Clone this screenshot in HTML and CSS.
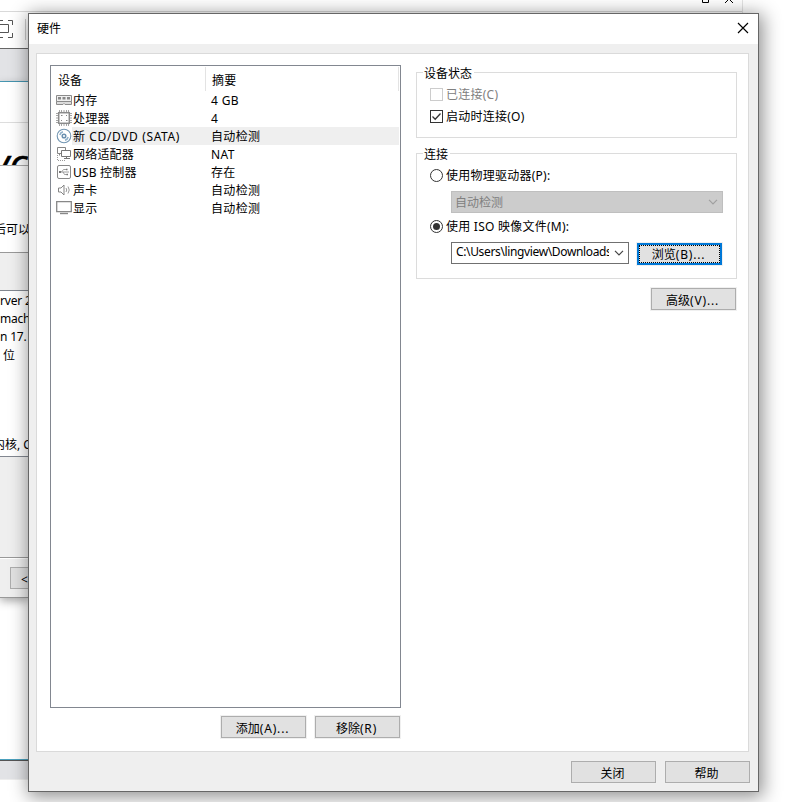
FILE: index.html
```html
<!DOCTYPE html>
<html lang="zh-CN">
<head>
<meta charset="utf-8">
<title>硬件</title>
<link rel="stylesheet" href="styles.css">
</head>
<body>
<div class="desktop">
  <div class="host">
    <div class="host-title">
      <svg width="40" height="11" viewBox="0 0 40 11"><path d="M2.5-4v6.500h6V-4M25 3l8-8M33 3l-8-8" fill="none" stroke="#000"/></svg>
    </div>
    <div class="host-tools">
      <svg width="13" height="20" viewBox="0 0 13 20"><path d="M0 5.500h8.500v8H0M8 1.500h4.500V6M8 18.500h4.500V14M0 1.500h3M0 18.500h3" fill="none" stroke="#555"/></svg>
      <i class="tool-sep"></i>
    </div>
    <div class="host-tabs"></div>
  </div>
  <div class="wizard">
    <div class="wiz-top"></div>
    <div class="wiz-logo"><span>vc</span></div>
    <div class="wiz-info">后可以</div>
    <div class="wiz-gap"></div>
    <div class="wiz-list"><p>rver 2</p><p>machi</p><p>n 17.</p><p class="bits">位</p><p class="cores">内核, C</p></div>
    <div class="wiz-space"></div>
    <div class="wiz-foot"><div class="back">&lt;</div></div>
  </div>
  <div class="host-bottom"></div>
</div>

<div class="dialog">
  <header class="titlebar"><span>硬件</span>
    <svg width="12" height="12" viewBox="0 0 12 12"><path d="M1 1l10 10M11 1L1 11" stroke="#000" stroke-width="1.150"/></svg>
  </header>
  <main class="page">
    <section class="left">
      <div class="list">
        <div class="row head"><span>设备</span><span class="sum">摘要</span></div>
        <div class="row"><svg class="ic" viewBox="0 0 16 16"><path d="M.5 3.500h15v6H.5z" fill="#f0f0f0" stroke="#8b8b8b"/><path d="M2 5h3v2.500H2zM6.500 5h3v2.500h-3zM11 5h3v2.500h-3z" fill="#888"/><path d="M.5 9.500v3H7l1-1 1 1h6.500v-3z" fill="#ddd" stroke="#8b8b8b"/></svg><span class="name">内存</span><span class="sum">4 GB</span></div>
        <div class="row"><svg class="ic" viewBox="0 0 16 16"><path d="M3.500 0v16M5.500 0v16M8 0v16M10.500 0v16M12.500 0v16M0 3.500h16M0 5.500h16M0 8h16M0 10.500h16M0 12.500h16" stroke="#a5a5a5"/><rect x="2.700" y="2.700" width="10.600" height="10.600" fill="#fff" stroke="#8b8b8b" stroke-width="1.500"/><path d="M5 5.500h1.500M10 5.500h1M5 10.500h1M10 10.500h1.500" stroke="#888"/></svg><span class="name">处理器</span><span class="sum">4</span></div>
        <div class="row selected"><svg class="ic" viewBox="0 0 16 16"><circle cx="8" cy="8" r="6.800" fill="#fff" stroke="#7295b2" stroke-width="1.100"/><circle cx="8" cy="8" r="1.800" fill="#fff" stroke="#6a90b0" stroke-width="1.500"/><path d="M3.800 7a4.500 4.500 0 0 1 3.200-3.200M12.200 9A4.500 4.500 0 0 1 9 12.200" fill="none" stroke="#8fb0ca" stroke-width="1.500"/></svg><span class="name cd">新 CD/DVD (SATA)</span><span class="sum">自动检测</span></div>
        <div class="row"><svg class="ic" viewBox="0 0 16 16"><path d="M1.500 7.500v-6h8V4M1.500 7.500H5M3.500 7.500v2" fill="none" stroke="#858585"/><path d="M5.500 4.500h9v6h-9zM10.500 10.500v2M8 12.500h6" fill="#fff" stroke="#777"/><path d="M1.500 9v5.500H10" fill="none" stroke="#999" stroke-dasharray="1 1"/></svg><span class="name">网络适配器</span><span class="sum">NAT</span></div>
        <div class="row"><svg class="ic" viewBox="0 0 16 16"><rect x="1.500" y="1.500" width="13" height="13" rx="1.500" fill="#fff" stroke="#888"/><path d="M3.500 8H13M5.500 8l2-2.500H10M7 8l1.500 2.500H11" fill="none" stroke="#888" stroke-width=".8"/><path d="M3 7h2v2H3zM10 4.800h1.500v1.500H10zM10.500 9.700H12v1.500h-1.500z" fill="#777"/></svg><span class="name">USB 控制器</span><span class="sum">存在</span></div>
        <div class="row"><svg class="ic" viewBox="0 0 16 16"><path d="M2.500 6h2.500l3-3v10l-3-3H2.500z" fill="#fff" stroke="#858585"/><path d="M10 6q1.500 2 0 4M12 4.500q2.500 3.500 0 7" fill="none" stroke="#999"/></svg><span class="name">声卡</span><span class="sum">自动检测</span></div>
        <div class="row"><svg class="ic" viewBox="0 0 16 16"><path d="M.7 1.700h14.600v10H.7z" fill="#fff" stroke="#888" stroke-width="1.300"/><path d="M4 13.500h8" stroke="#888" stroke-width="1.400"/></svg><span class="name">显示</span><span class="sum">自动检测</span></div>
      </div>
      <div class="actions"><button>添加<span>(A)...</span></button><button>移除<span>(R)</span></button></div>
    </section>
    <section class="right">
      <div class="group status">
        <div class="legend"><span>设备状态</span></div>
        <label class="option off"><i class="box"></i>已连接(C)</label>
        <label class="option second"><i class="box"><svg width="11" height="11" viewBox="0 0 11 11"><path d="M1.500 5.500l2.700 2.700L9.500 2.500" fill="none" stroke="#333" stroke-width="1.300"/></svg></i>启动时连接(O)</label>
      </div>
      <div class="group connect">
        <div class="legend"><span>连接</span></div>
        <label class="option"><i class="radio"></i>使用物理驱动器(P):</label>
        <div class="combo disabled"><span>自动检测</span><svg width="10" height="6" viewBox="0 0 10 6"><path d="M1 .8l4 4 4-4" fill="none" stroke="#a0a0a0" stroke-width="1.200"/></svg></div>
        <label class="option"><i class="radio on"></i>使用 ISO 映像文件(M):</label>
        <div class="iso"><div class="combo"><span class="path">C:\Users\lingview\Downloads</span><svg width="10" height="6" viewBox="0 0 10 6"><path d="M1 .8l4 4 4-4" fill="none" stroke="#444" stroke-width="1.200"/></svg></div><button class="focus">浏览<span>(B)...</span></button></div>
      </div>
      <button class="advanced">高级<span>(V)...</span></button>
    </section>
  </main>
  <footer class="footer"><button>关闭</button><button>帮助</button></footer>
</div>
</body>
</html>
```
FILE: styles.css
```css
* { box-sizing: border-box; }
body { margin: 0; width: 789px; height: 802px; overflow: hidden; background: #fff; color: #000; font: 12px/18px "Noto Sans", "Noto Sans CJK SC", sans-serif; position: relative; }
p { margin: 0; }
svg { display: block; flex: none; }
.desktop { height: 802px; display: flex; flex-direction: column; }
.host { width: 743px; border-right: 1px solid #e3e3e3; }
.host-title { height: 12px; border-bottom: 1px solid #d9d9d9; padding-left: 700px; }
.host-tools { height: 36px; display: flex; align-items: flex-start; padding-top: 7px; }
.tool-sep { width: 1px; height: 21px; background: #ccc; margin-left: 12px; }
.host-tabs { height: 34px; border-top: 1px solid #666; border-bottom: 1px solid #4ba0bd; background: #e2e3e6; width: 29px; }
.wizard { width: 29px; height: 516px; overflow: hidden; border-bottom: 1px solid #999; box-shadow: 0 3px 10px rgba(0,0,0,.35); display: flex; flex-direction: column; white-space: nowrap; }
.wiz-top { height: 41px; border-bottom: 1px solid #ddd; }
.wiz-logo { height: 43px; border-bottom: 1px solid #aaa; overflow: hidden; }
.wiz-logo span { display: block; font: italic 40px/50px "Open Sans", sans-serif; margin: 15px 0 0 -9px; -webkit-text-stroke: .6px #000; }
.wiz-info { height: 87px; padding-top: 55px; margin-left: -6px; border-bottom: 1px solid #999; }
.wiz-gap { height: 37px; background: #efefef; }
.wiz-list { height: 168px; border-top: 1px solid #828790; border-bottom: 1px solid #828790; padding-top: 1px; letter-spacing: -.2px; }
.wiz-list p { height: 18px; }
.wiz-list .bits { padding: 1px 0 0 3px; }
.wiz-list .cores { margin: 72px 0 0 -7px; letter-spacing: 0; }
.wiz-space { height: 101px; background: #efefef; border-bottom: 1px solid #999; }
.wiz-foot { height: 39px; background: #efefef; border-top: 1px solid #fff; padding: 8px 0 0 10px; }
.back { width: 85px; height: 22px; border: 1px solid #adadad; background: #e1e1e1; padding: 3px 0 0 10px; }
.host-bottom { margin-top: 161px; width: 743px; height: 21px; background: #e2e3e6; border-top: 1px solid #4ba0bd; box-shadow: inset 0 1px #555, inset 0 -1px #eee; }

.dialog { position: absolute; left: 28px; top: 13px; width: 731px; height: 779px; border: 1px solid #666; background: #efefef; box-shadow: 2px 3px 17px 2px rgba(0,0,0,.43); }
.titlebar { height: 30px; background: #fff; display: flex; justify-content: space-between; align-items: center; padding: 0 9px 0 8px; }
.titlebar svg { margin-top: -2px; }
.page { margin: 9px 9px 0 7px; height: 699px; border: 1px solid #dadada; background: #fff; display: flex; padding: 11px 11px 0 13px; }
.left { width: 351px; }
.list { height: 643px; border: 1px solid #828790; padding: 1px 1px 0 5px; }
.row { height: 18px; display: flex; align-items: center; }
.row.head { height: 24px; padding-left: 2px; border-right: 1px solid #e3e3e3; }
.row.head > span:first-child { width: 147px; padding-top: 3px; }
.row .ic { width: 16px; height: 16px; }
.name { width: 133px; padding-left: 1px; height: 18px; line-height: 20px; white-space: nowrap; letter-spacing: .2px; }
.cd { letter-spacing: .62px; }
.sum { flex: 1; padding-left: 6px; line-height: 20px; height: 18px; letter-spacing: .35px; }
.head .sum { height: 24px; border-left: 1px solid #e3e3e3; line-height: 28px; padding-left: 6px; }
.selected .name, .selected .sum { background: #efefef; }
.actions { display: flex; justify-content: flex-end; gap: 9px; margin: 8px 1px 0 0; }
button { font: inherit; color: #000; width: 85px; height: 22px; border: 1px solid #adadad; background: #e1e1e1; padding: 3px 2px 0 0; line-height: 17px; box-shadow: 0 0 0 1px #f0f0f0; display: block; border-radius: 0; white-space: nowrap; }
button span { letter-spacing: .8px; }
.right { margin: 7px 0 0 15px; width: 321px; }
.group { border: 1px solid #dcdcdc; padding: 0 13px; }
.status { height: 66px; }
.connect { height: 126px; margin-top: 15px; }
.legend { height: 14px; margin: -8px 0 0 -7px; line-height: 18px; }
.legend span { background: #fff; padding: 0 2px 0 1px; display: inline-block; }
.option { height: 18px; display: flex; align-items: center; line-height: 18px; letter-spacing: .25px; }
.box { width: 13px; height: 13px; border: 1px solid #333; margin: -2px 3px 0 0; flex: none; }
.status .option { margin-top: 7px; }
.status .second { margin-top: 4px; }
.off { color: #808080; }
.off .box { border-color: #ccc; }
.radio { width: 13px; height: 13px; border: 1px solid #333; border-radius: 50%; margin: -2px 3px 0 0; display: grid; place-items: center; flex: none; }
.radio.on::after { content: ""; width: 7px; height: 7px; border-radius: 50%; background: #333; }
.connect .legend + .option { margin-top: 7px; }
.combo { height: 22px; border: 1px solid #707070; display: flex; justify-content: space-between; align-items: center; padding: 0 4px; background: #fff; }
.combo.disabled { width: 272px; margin: 6px 0 5px 21px; background: #ccc; border-color: #bfbfbf; color: #808080; padding-left: 3px; }
.disabled span { padding-top: 2px; }
.iso { display: flex; gap: 8px; margin: 6px 0 0 21px; }
.iso .combo { width: 178px; }
.path { width: 153px; overflow: hidden; white-space: nowrap; height: 20px; line-height: 18px; letter-spacing: -.36px; }
.focus { border: 2px solid #0078d7; outline: 1px dotted #000; outline-offset: -3px; margin-top: 1px; padding-top: 2px; line-height: 16px; }
.advanced { margin: 9px 1px 0 auto; }
.footer { display: flex; justify-content: flex-end; gap: 9px; padding: 9px 8px 0 0; }
```
